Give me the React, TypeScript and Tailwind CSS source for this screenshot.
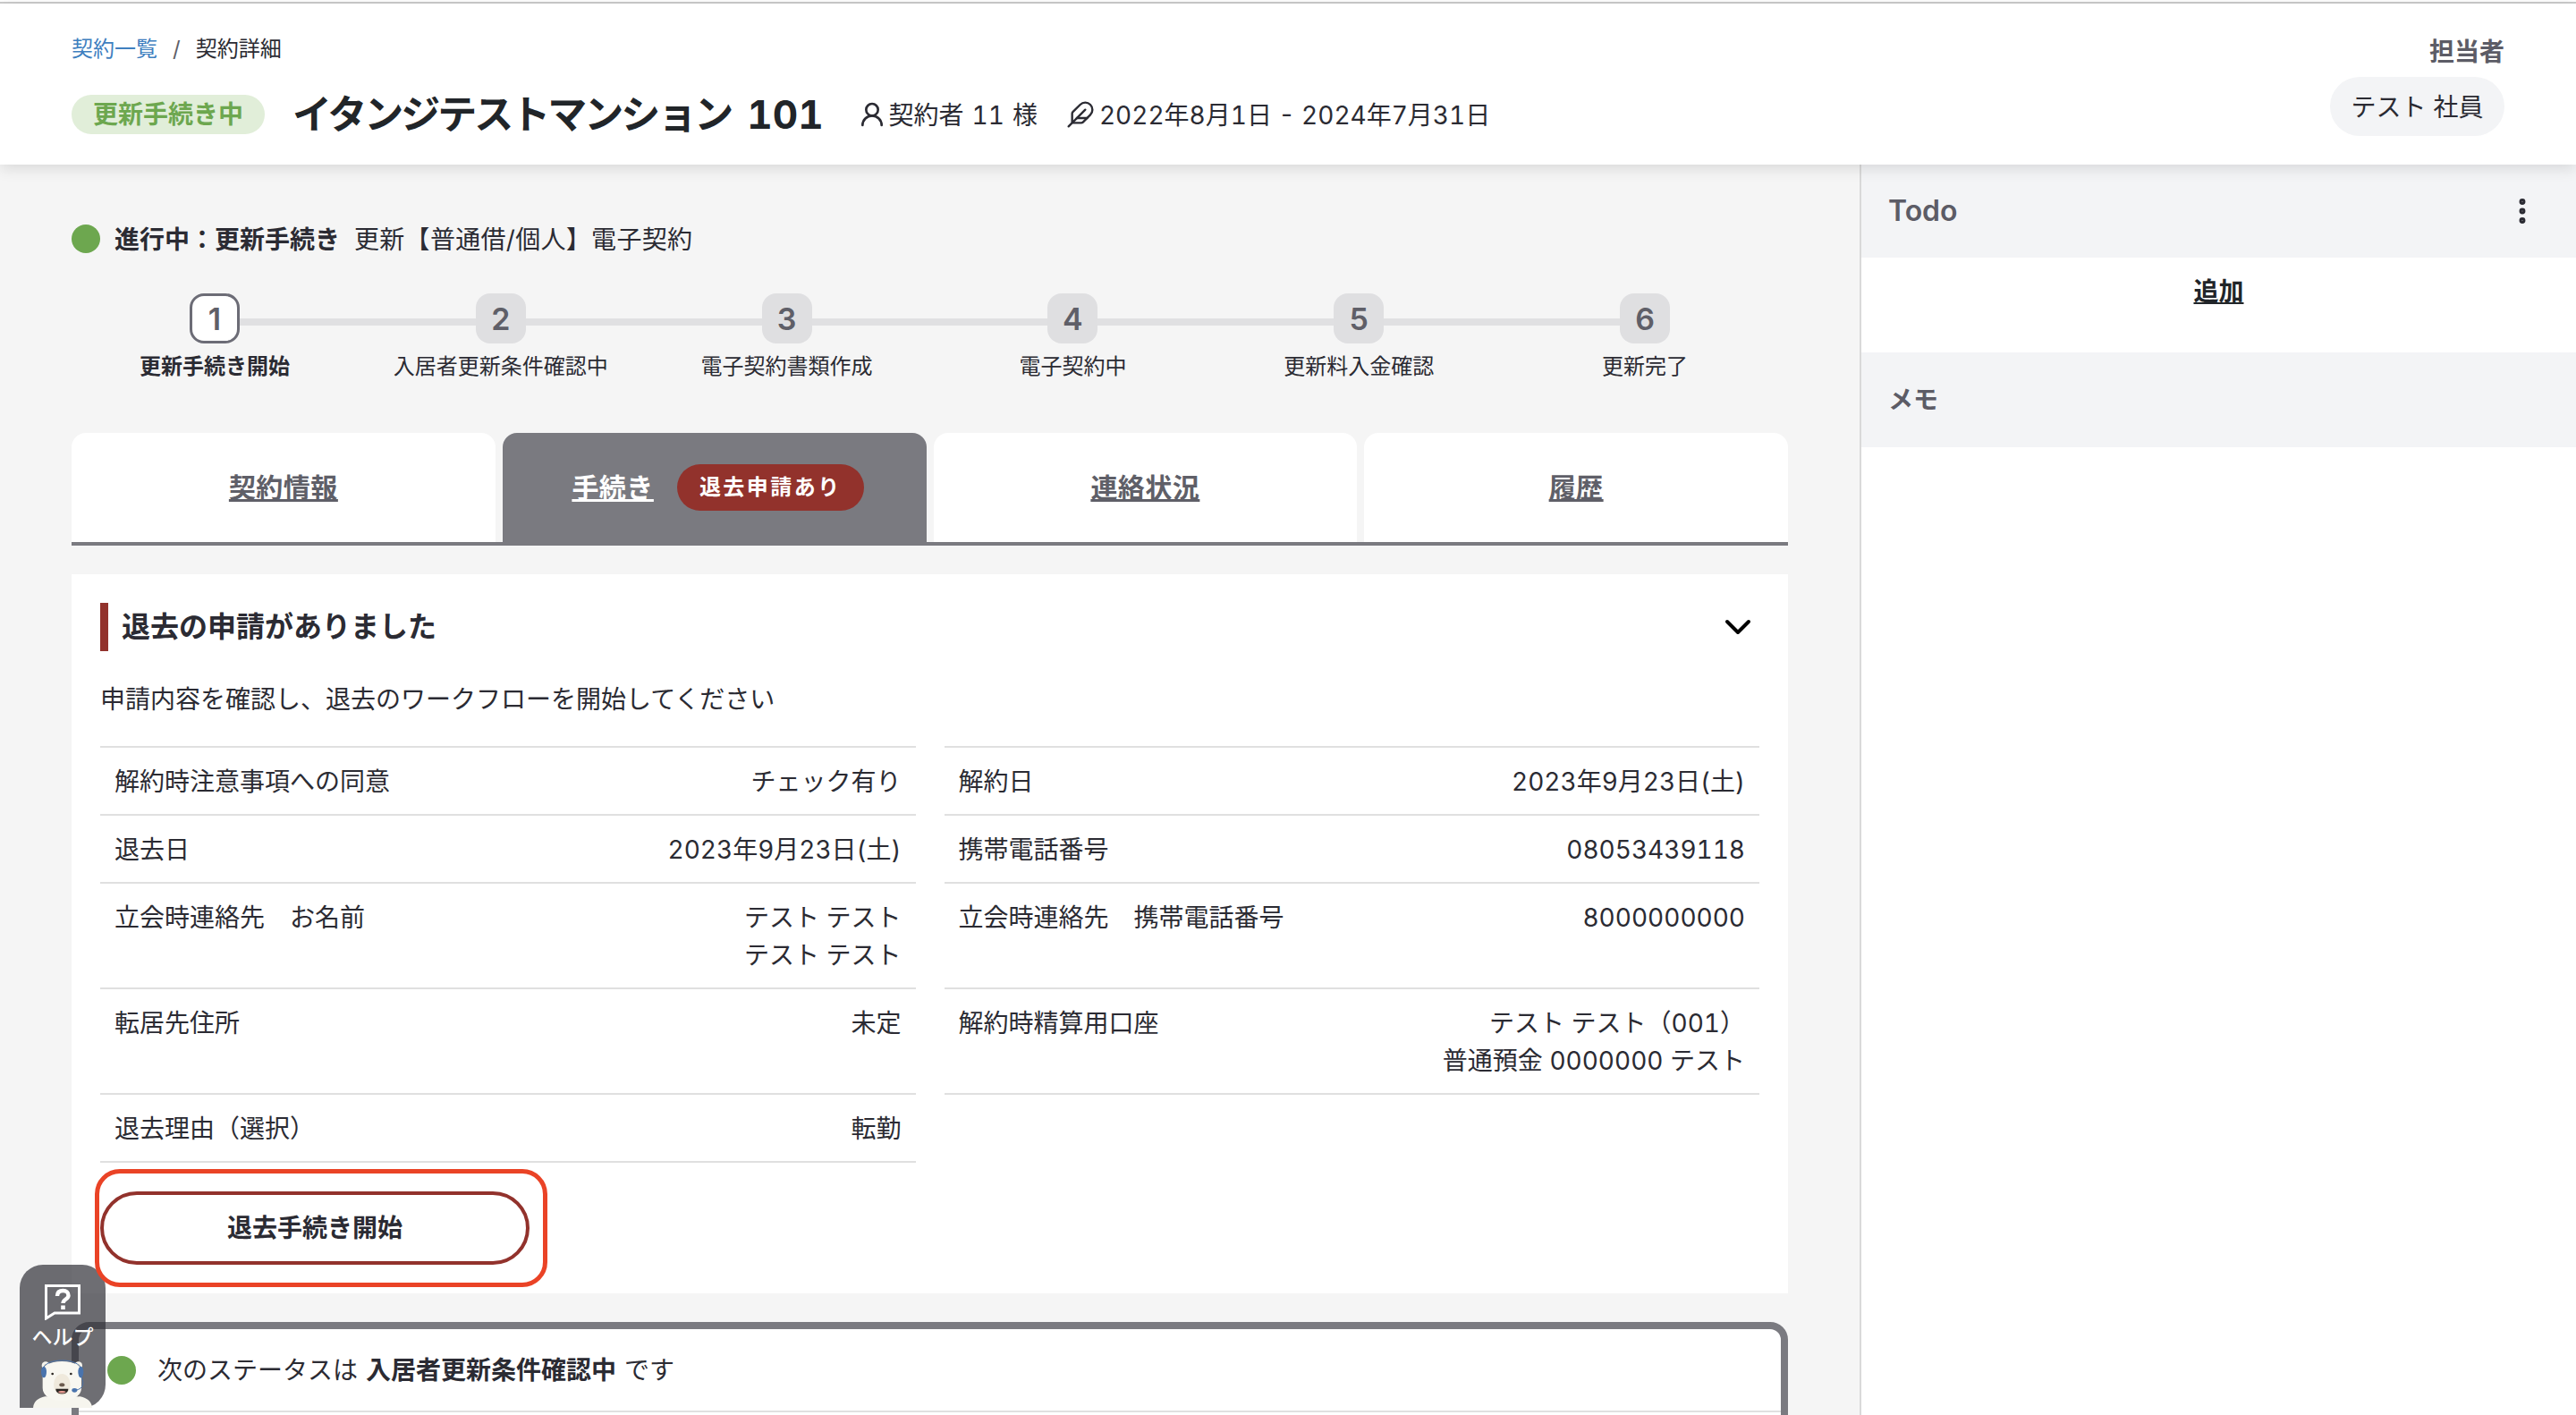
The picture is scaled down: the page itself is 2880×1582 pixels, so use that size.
import { ChevronDown, EllipsisVertical, Feather, UserRound } from "lucide-react";

const steps = [
  "更新手続き開始",
  "入居者更新条件確認中",
  "電子契約書類作成",
  "電子契約中",
  "更新料入金確認",
  "更新完了",
];

const leftRows = [
  { label: "解約時注意事項への同意", value: ["チェック有り"] },
  { label: "退去日", value: ["2023年9月23日(土)"] },
  { label: "立会時連絡先　お名前", value: ["テスト テスト", "テスト テスト"] },
  { label: "転居先住所", value: ["未定"], tall: true },
  { label: "退去理由（選択）", value: ["転勤"] },
];

const rightRows = [
  { label: "解約日", value: ["2023年9月23日(土)"] },
  { label: "携帯電話番号", value: ["08053439118"] },
  { label: "立会時連絡先　携帯電話番号", value: ["8000000000"], tall: true },
  { label: "解約時精算用口座", value: ["テスト テスト（001）", "普通預金 0000000 テスト"] },
];

function InfoRow({ label, value, tall }: { label: string; value: string[]; tall?: boolean }) {
  return (
    <div className={`flex justify-between border-t-2 border-[#e0e0e0] px-4 pb-[15px] pt-[17px] text-[28px] leading-[42px] ${tall ? "min-h-[118px]" : ""}`}>
      <div>{label}</div>
      <div className="text-right tabular-nums">
        {value.map((line) => (
          <div key={line}>{line}</div>
        ))}
      </div>
    </div>
  );
}

function Bear() {
  return (
    <svg viewBox="0 0 198 162" className="h-[54px] w-[66px]">
      <path d="M0 162C2 140 16 130 40 124H158C182 130 196 140 198 162Z" fill="#f6f5ee" />
      <circle cx="42" cy="20" r="13" fill="#f6f5ee" />
      <circle cx="152" cy="20" r="13" fill="#f6f5ee" />
      <circle cx="42" cy="20" r="6" fill="#e6dcc8" />
      <circle cx="152" cy="20" r="6" fill="#e6dcc8" />
      <path d="M32 44C32 18 60 6 97 6C134 6 162 18 162 44V96C162 122 134 138 97 138C60 138 32 122 32 96Z" fill="#f8f7f1" />
      <path d="M30 36C36 12 66 3 97 3C128 3 158 12 164 36" fill="none" stroke="#4a74ad" strokeWidth="3" />
      <ellipse cx="36" cy="42" rx="9" ry="19" fill="#4a74ad" />
      <ellipse cx="160" cy="42" rx="9" ry="19" fill="#4a74ad" />
      <path d="M162 60C172 78 170 98 142 103" fill="none" stroke="#4a74ad" strokeWidth="3" />
      <ellipse cx="139" cy="103" rx="9" ry="7" fill="#4a74ad" />
      <ellipse cx="97" cy="84" rx="28" ry="36" fill="#efe9dc" />
      <circle cx="65" cy="48" r="4" fill="#2b2622" />
      <circle cx="127" cy="48" r="4" fill="#2b2622" />
      <ellipse cx="97" cy="85" rx="9" ry="6" fill="#6b5a4d" />
      <path d="M76 98H118C118 110 108 115 97 115C86 115 76 110 76 98Z" fill="#2b2622" />
      <path d="M84 108C90 104 104 104 110 108C106 114 88 114 84 108Z" fill="#e79a92" />
    </svg>
  );
}

function HelpWidget() {
  return (
    <div className="absolute left-[22px] top-[1414px] z-20 flex h-[160px] w-[96px] flex-col items-center rounded-t-[26px] rounded-br-[26px] bg-[#303038]/70 pt-[22px] text-white">
      <svg viewBox="0 0 40 40" className="h-[40px] w-[40px]" fill="none" stroke="#fff">
        <path d="M1.5 1.5H38.5V32H11L1.5 38Z" strokeWidth="3" />
        <path d="M14 13C14 8.5 17 7 20.5 7C24 7 26.5 9 26.5 12.5C26.5 16.5 20.5 16.5 20.5 21" strokeWidth="4.4" />
        <path d="M20.5 23.5V28" strokeWidth="4.6" />
      </svg>
      <div className="mt-[2px] text-[23px] font-medium leading-[34px]">ヘルプ</div>
      <div className="mt-auto">
        <Bear />
      </div>
    </div>
  );
}

export default function App() {
  return (
    <div className="relative h-screen overflow-hidden bg-[#f5f5f5] font-['Inter','Noto_Sans_CJK_JP',sans-serif] text-[#2b2b33]">
      <div className="h-[4px] border-b-2 border-[#cccccc] bg-white" />

      <header className="relative z-10 flex h-[180px] justify-between bg-white px-[80px] shadow-[0_4px_16px_rgba(0,0,0,0.12)]">
        <div>
          <div className="mt-[33px] flex h-[36px] items-center text-[24px] leading-[36px]">
            <span className="text-[#3f7fbf]">契約一覧</span>
            <span className="mx-[17px] text-[#5f5f68]">/</span>
            <span>契約詳細</span>
          </div>
          <div className="mt-[33px] flex h-[44px] items-center">
            <div className="flex h-[44px] w-[216px] items-center justify-center rounded-full bg-[#e1eed9] text-[28px] font-bold text-[#6da74f]">更新手続き中</div>
            <h1 className="ml-[31px] text-[44px] font-bold tracking-[-3px] text-[#212529]">
              イタンジテストマンション
              <span className="ml-[18px] tracking-[0px] tabular-nums">101</span>
            </h1>
            <UserRound className="ml-[38px] h-[32px] w-[32px]" strokeWidth={2} />
            <span className="ml-[3px] pt-[2px] text-[28px] tabular-nums [word-spacing:1.5px]">契約者 11 様</span>
            <Feather className="ml-[32px] h-[32px] w-[32px]" strokeWidth={1.8} />
            <span className="ml-[5px] pt-[2px] text-[28px] tabular-nums">2022年8月1日 - 2024年7月31日</span>
          </div>
        </div>
        <div className="flex flex-col items-end">
          <div className="mt-[36px] text-[28px] font-bold leading-[36px] text-[#5c5c66]">担当者</div>
          <div className="mt-[10px] flex h-[66px] w-[195px] items-center justify-center rounded-full bg-[#f3f4f6] pt-[2px] text-[28px]">テスト 社員</div>
        </div>
      </header>

      <div className="flex">
        <main className="w-[2079px] shrink-0 px-[80px] pt-[67px]">
          <div className="flex h-[32px] items-center text-[28px]">
            <span className="h-[32px] w-[32px] rounded-full bg-[#6da74f]" />
            <span className="ml-[16px] pt-[2px] font-bold">進行中：更新手続き</span>
            <span className="ml-[16px] pt-[2px] tracking-[0.3px]">更新【普通借/個人】電子契約</span>
          </div>

          <div className="mt-[45px] grid grid-cols-6">
            {steps.map((label, i) => (
              <div key={label} className="relative flex flex-col items-center">
                {i < steps.length - 1 && <div className="absolute left-1/2 top-[28px] h-[8px] w-full bg-[#e0e0e2]" />}
                <div
                  className={`relative flex h-[56px] w-[56px] items-center justify-center rounded-[16px] text-[34px] font-semibold text-[#5f5f68] ${
                    i === 0 ? "border-[3px] border-[#6c6c76] bg-white" : "bg-[#dfdfe1]"
                  }`}
                >
                  {i + 1}
                </div>
                <div className={`mt-[8px] text-[24px] leading-[36px] ${i === 0 ? "font-bold" : ""}`}>{label}</div>
              </div>
            ))}
          </div>

          <div className="mt-[56px] grid h-[126px] grid-cols-4 gap-2 border-b-4 border-[#7a7a80] text-[30px] font-bold tracking-[0.5px] text-[#5f5f68]">
            <div className="flex items-center justify-center rounded-t-[16px] bg-white underline">契約情報</div>
            <div className="flex items-center justify-center gap-[26px] rounded-t-[16px] bg-[#7a7a80] pl-[8px] text-white">
              <span className="underline">手続き</span>
              <span className="flex h-[52px] w-[209px] items-center justify-center rounded-full bg-[#92322c] text-[24px] tracking-[2.5px]">退去申請あり</span>
            </div>
            <div className="flex items-center justify-center rounded-t-[16px] bg-white underline">連絡状況</div>
            <div className="flex items-center justify-center rounded-t-[16px] bg-white underline">履歴</div>
          </div>

          <section className="mt-[32px] bg-white px-[32px] pb-[32px] pt-[32px]">
            <div className="flex h-[54px] items-center justify-between">
              <h2 className="border-l-[9px] border-[#92322c] pl-[15px] text-[32px] font-bold leading-[54px]">退去の申請がありました</h2>
              <ChevronDown className="h-[48px] w-[48px] text-black" strokeWidth={2} />
            </div>
            <p className="mt-[33px] text-[28px] leading-[42px]">申請内容を確認し、退去のワークフローを開始してください</p>

            <div className="mt-[31px] grid grid-cols-2 gap-x-8">
              <div className="border-b-2 border-[#e0e0e0]">
                {leftRows.map((r) => (
                  <InfoRow key={r.label} {...r} />
                ))}
              </div>
              <div>
                {rightRows.map((r) => (
                  <InfoRow key={r.label} {...r} />
                ))}
                <div className="border-t-2 border-[#e0e0e0]" />
              </div>
            </div>

            <div className="relative mt-[32px] w-[480px]">
              <button className="flex h-[82px] w-full items-center justify-center rounded-full border-4 border-[#92322c] bg-white text-[28px] font-bold">退去手続き開始</button>
              <div className="absolute -left-[6px] -top-[25px] z-30 h-[132px] w-[506px] rounded-[28px] border-[5px] border-[#ea4326]" />
            </div>
          </section>

          <section className="mt-[32px] rounded-t-[20px] border-[8px] border-[#7a7a80] bg-white">
            <div className="flex h-[93px] items-center border-b-2 border-[#e0e0e0] pl-[32px] text-[28px]">
              <span className="h-[32px] w-[32px] rounded-full bg-[#6da74f]" />
              <span className="ml-[24px]">次のステータスは</span>
              <span className="ml-[9px] font-bold">入居者更新条件確認中</span>
              <span className="ml-[9px]">です</span>
            </div>
            <div className="h-[120px]" />
          </section>
        </main>

        <aside className="h-[1398px] flex-1 border-l-2 border-[#d9d9d9] bg-white">
          <div className="flex h-[104px] items-center justify-between bg-[#f3f4f6] pl-[30px] pr-[42px] text-[#5c5c66]">
            <span className="text-[32px] font-semibold">Todo</span>
            <EllipsisVertical className="h-[36px] w-[36px] text-[#2b2b33]" strokeWidth={2.6} />
          </div>
          <div className="flex h-[106px] justify-center pt-[18px]">
            <span className="text-[28px] font-bold leading-[40px] text-[#212529] underline">追加</span>
          </div>
          <div className="flex h-[106px] items-center bg-[#f3f4f6] pl-[30px] text-[28px] font-bold text-[#5c5c66]">メモ</div>
        </aside>
      </div>

      <HelpWidget />
    </div>
  );
}
